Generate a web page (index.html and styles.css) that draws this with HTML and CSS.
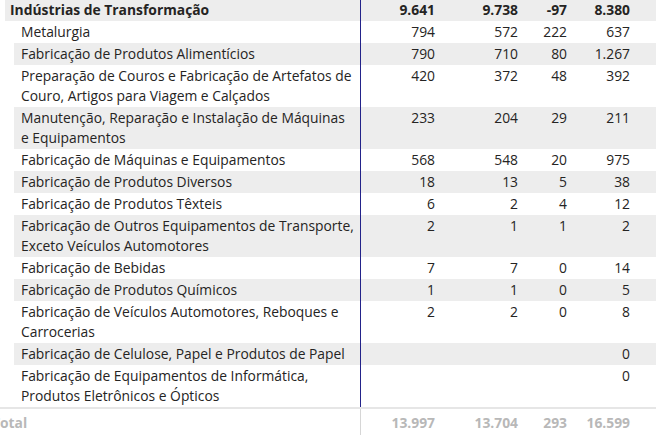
FILE: index.html
```html
<!DOCTYPE html>
<html lang="pt">
<head>
<meta charset="utf-8">
<link rel="stylesheet" href="styles.css">
</head>
<body>
<div class="matrix">
  <div class="row group">
    <div class="label">Indústrias de Transformação</div>
    <div class="num">9.641</div><div class="num">9.738</div><div class="num">-97</div><div class="num">8.380</div>
  </div>
  <div class="row">
    <div class="label">Metalurgia</div>
    <div class="num">794</div><div class="num">572</div><div class="num">222</div><div class="num">637</div>
  </div>
  <div class="row band">
    <div class="label">Fabricação de Produtos Alimentícios</div>
    <div class="num">790</div><div class="num">710</div><div class="num">80</div><div class="num">1.267</div>
  </div>
  <div class="row">
    <div class="label">Preparação de Couros e Fabricação de Artefatos de<br>Couro, Artigos para Viagem e Calçados</div>
    <div class="num">420</div><div class="num">372</div><div class="num">48</div><div class="num">392</div>
  </div>
  <div class="row band">
    <div class="label">Manutenção, Reparação e Instalação de Máquinas<br>e Equipamentos</div>
    <div class="num">233</div><div class="num">204</div><div class="num">29</div><div class="num">211</div>
  </div>
  <div class="row">
    <div class="label">Fabricação de Máquinas e Equipamentos</div>
    <div class="num">568</div><div class="num">548</div><div class="num">20</div><div class="num">975</div>
  </div>
  <div class="row band">
    <div class="label">Fabricação de Produtos Diversos</div>
    <div class="num">18</div><div class="num">13</div><div class="num">5</div><div class="num">38</div>
  </div>
  <div class="row">
    <div class="label">Fabricação de Produtos Têxteis</div>
    <div class="num">6</div><div class="num">2</div><div class="num">4</div><div class="num">12</div>
  </div>
  <div class="row band">
    <div class="label">Fabricação de Outros Equipamentos de Transporte,<br>Exceto Veículos Automotores</div>
    <div class="num">2</div><div class="num">1</div><div class="num">1</div><div class="num">2</div>
  </div>
  <div class="row">
    <div class="label">Fabricação de Bebidas</div>
    <div class="num">7</div><div class="num">7</div><div class="num">0</div><div class="num">14</div>
  </div>
  <div class="row band">
    <div class="label">Fabricação de Produtos Químicos</div>
    <div class="num">1</div><div class="num">1</div><div class="num">0</div><div class="num">5</div>
  </div>
  <div class="row">
    <div class="label">Fabricação de Veículos Automotores, Reboques e<br>Carrocerias</div>
    <div class="num">2</div><div class="num">2</div><div class="num">0</div><div class="num">8</div>
  </div>
  <div class="row band">
    <div class="label">Fabricação de Celulose, Papel e Produtos de Papel</div>
    <div class="num"></div><div class="num"></div><div class="num"></div><div class="num">0</div>
  </div>
  <div class="row">
    <div class="label">Fabricação de Equipamentos de Informática,<br>Produtos Eletrônicos e Ópticos</div>
    <div class="num"></div><div class="num"></div><div class="num"></div><div class="num">0</div>
  </div>
  <div class="row total">
    <div class="label"><span class="total-text">Total</span></div>
    <div class="num">13.997</div><div class="num">13.704</div><div class="num">293</div><div class="num">16.599</div>
  </div>
</div>
</body>
</html>
```
FILE: styles.css
```css
html, body {
  margin: 0;
  padding: 0;
  background: #ffffff;
  overflow: hidden;
}
body {
  font-family: "Open Sans", "Noto Sans", sans-serif;
  font-size: 13.85px;
  color: #252423;
}
.matrix {
  width: 656px;
  margin-top: -1px;
}
.row {
  display: grid;
  grid-template-columns: 347px 74px 83px 49px 63px 1fr;
  margin-left: 14px;
  line-height: 20px;
}
.row > div {
  padding: 1px 0;
}
.label {
  padding-left: 7px !important;
  border-right: 1px solid #23238a;
  white-space: nowrap;
  overflow: hidden;
}
.num {
  text-align: right;
}
.band {
  background: #ededed;
}
.group {
  margin-left: 5px;
  grid-template-columns: 356px 74px 83px 49px 63px 1fr;
  background: #ededed;
  font-weight: 700;
}
.group .label {
  padding-left: 5px !important;
}
.total {
  margin-left: 0;
  grid-template-columns: 361px 74px 83px 49px 63px 1fr;
  border-top: 2px solid #e6e6e6;
  font-weight: 700;
  color: #b8b8b8;
  line-height: 22px;
}
.total > div {
  padding: 3px 0 1px 0;
}
.total .label {
  border-right-color: #d6d6d6;
  padding-left: 0 !important;
}
.total-text {
  margin-left: -8px;
}
```
